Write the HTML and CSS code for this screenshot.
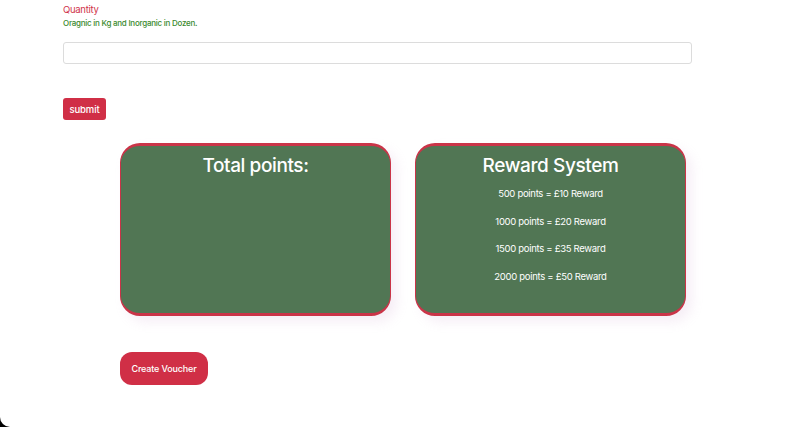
FILE: index.html
```html
<!DOCTYPE html>
<html>
<head>
<meta charset="utf-8">
<link rel="stylesheet" href="styles.css">
</head>
<body>
<div class="page">
  <form class="form">
    <label class="label">Quantity</label>
    <div class="hint">Oragnic in Kg and Inorganic in Dozen.</div>
    <input class="input" type="text">
    <button class="submit" type="button">submit</button>
  </form>
  <div class="cards">
    <div class="card">
      <h2 class="card-title">Total points:</h2>
    </div>
    <div class="card">
      <h2 class="card-title">Reward System</h2>
      <p class="reward">500 points = £10 Reward</p>
      <p class="reward">1000 points = £20 Reward</p>
      <p class="reward">1500 points = £35 Reward</p>
      <p class="reward">2000 points = £50 Reward</p>
    </div>
  </div>
  <div class="voucher-row">
    <button class="voucher" type="button">Create Voucher</button>
  </div>
</div>
</body>
</html>
```
FILE: styles.css
```css
html {
  background: #000;
  height: 100%;
}
body {
  margin: 0;
  height: 100%;
  background: #fff;
  border-bottom-left-radius: 10px;
  font-family: Inter, "Liberation Sans", sans-serif;
  overflow: hidden;
}
.page {
  padding-top: 3px;
}
.form {
  display: flex;
  flex-direction: column;
  align-items: flex-start;
  padding-left: 63px;
}
.label {
  color: #d0324a;
  font-size: 9.5px;
  letter-spacing: -0.3px;
  line-height: 14px;
}
.hint {
  color: #3a8a2e;
  font-size: 8px;
  font-weight: 500;
  letter-spacing: -0.25px;
  line-height: 11px;
  margin-top: 1px;
}
.input {
  box-sizing: border-box;
  width: 629px;
  height: 22px;
  margin: 13px 0 0;
  border: 1px solid #dcdcdc;
  border-radius: 3px;
  background: #fff;
}
.submit {
  margin-top: 34px;
  height: 22px;
  width: 43px;
  padding: 0;
  border: none;
  border-radius: 3px;
  background: #d02f46;
  color: #fff;
  font-family: Inter, "Liberation Sans", sans-serif;
  font-size: 9.5px;
  font-weight: 500;
  letter-spacing: -0.1px;
}
.cards {
  display: flex;
  gap: 24px;
  padding-left: 120px;
  margin-top: 23px;
}
.card {
  box-sizing: border-box;
  width: 271px;
  height: 173px;
  background: #517654;
  border-top: 3px solid #ca3448;
  border-bottom: 3px solid #ca3448;
  border-left: 1px solid #ca3448;
  border-right: 1px solid #ca3448;
  border-radius: 20px;
  box-shadow: 6px 6px 12px rgba(200, 150, 200, 0.16);
  color: #fff;
  text-align: center;
}
.card-title {
  margin: 7.5px 0 0;
  font-size: 19px;
  font-weight: 500;
  letter-spacing: -0.4px;
  line-height: 24px;
}
.reward {
  margin: 0;
  font-size: 9.5px;
  letter-spacing: -0.3px;
  line-height: 12px;
  margin-top: 15.5px;
}
.card-title + .reward {
  margin-top: 10.5px;
}
.voucher-row {
  padding-left: 120px;
  margin-top: 36px;
}
.voucher {
  width: 88px;
  height: 33px;
  border: none;
  border-radius: 12px;
  background: #d02f46;
  color: #fff;
  font-family: Inter, "Liberation Sans", sans-serif;
  font-size: 9px;
  font-weight: 500;
  letter-spacing: -0.15px;
  padding: 0;
}
```
